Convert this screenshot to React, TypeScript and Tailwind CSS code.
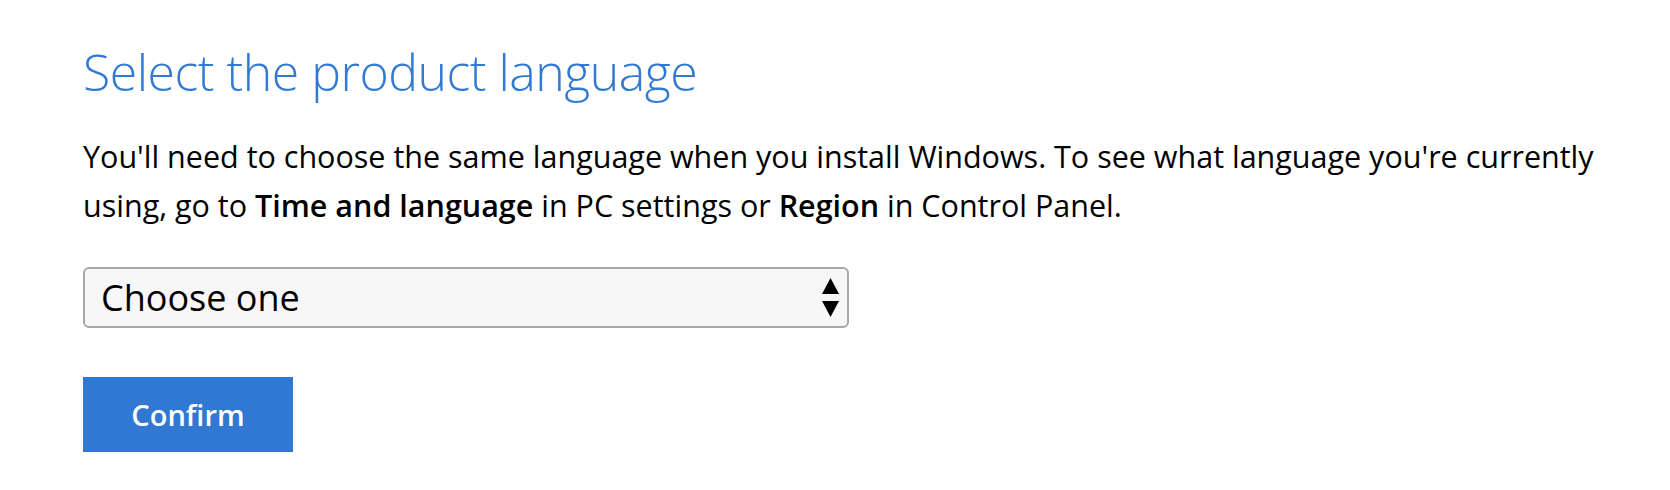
import React from 'react';

const font = { fontFamily: '"Open Sans", "Noto Sans", sans-serif' };

const App = () => {
  return (
    <div className="min-h-screen bg-white pl-[83px] pt-[40px] text-black" style={font}>
      <h1 className="text-[50px] font-light leading-[64px] text-[#3179d2] tracking-[-0.5px]">
        Select the product language
      </h1>
      <p className="mt-[28px] w-[1545px] text-[30.5px] leading-[49px] text-black">
        You'll need to choose the same language when you install Windows. To see what language you're currently using, go to{' '}
        <b className="font-semibold">Time and language</b> in PC settings or <b className="font-semibold">Region</b> in Control Panel.
      </p>
      {/* Language dropdown */}
      <div className="mt-[37px] flex h-[61px] w-[766px] items-center justify-between rounded-[6px] border-2 border-[#a8a8a8] bg-[#f7f7f7] pl-[16px] pr-[8px]">
        <span className="text-[36px] leading-none">Choose one</span>
        <svg width="17" height="40" viewBox="0 0 17 40">
          <polygon points="8.5,0 17,16 0,16" fill="#000" />
          <polygon points="0,23 17,23 8.5,39" fill="#000" />
        </svg>
      </div>
      <button className="mt-[49px] flex h-[75px] w-[210px] items-center justify-center bg-[#3078d1] text-[29px] font-semibold text-white">
        Confirm
      </button>
    </div>
  );
};

export default App;
